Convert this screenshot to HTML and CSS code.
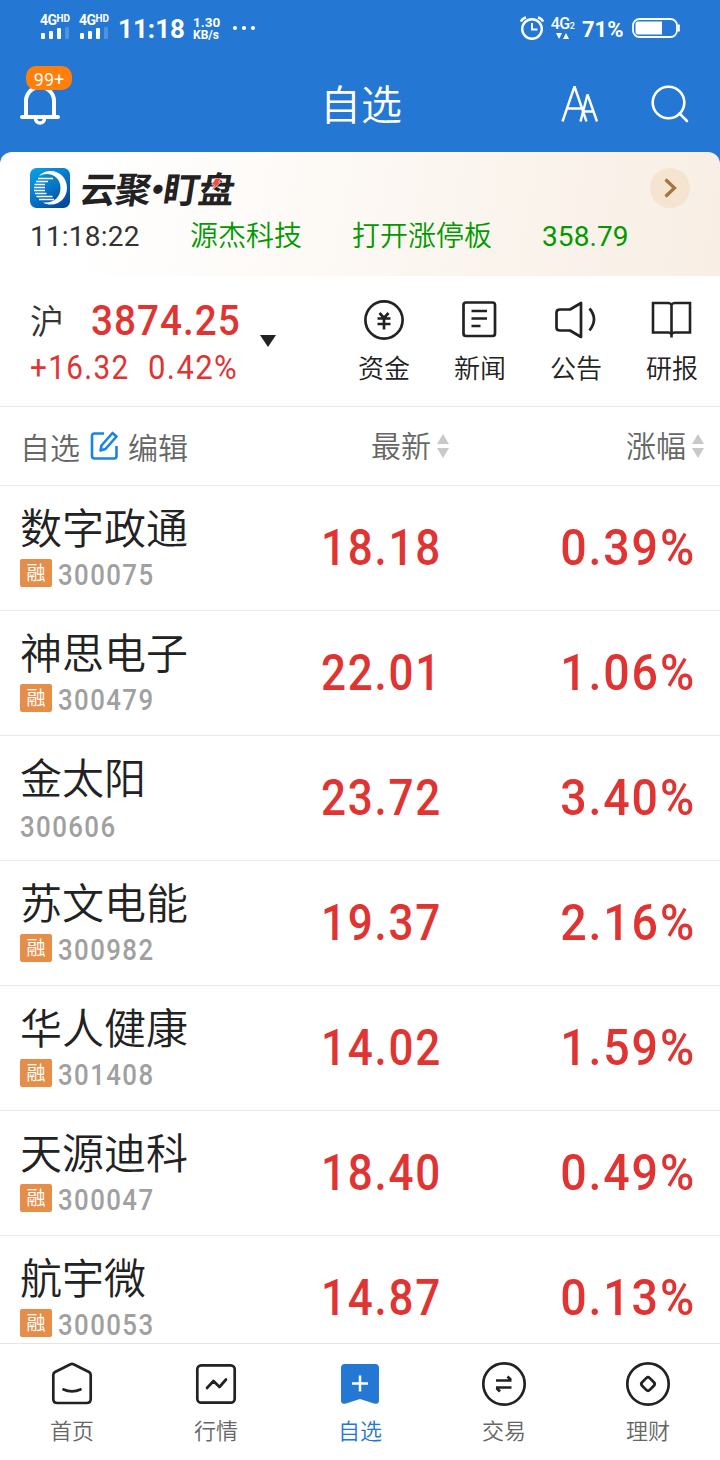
FILE: index.html
```html
<!DOCTYPE html>
<html lang="zh-CN">
<head>
<meta charset="utf-8">
<title>自选</title>
<link rel="stylesheet" href="styles.css">
</head>
<body>
<div class="app">
  <header class="top">
    <div class="status">
      <div class="status-left">
        <div class="signal"><div class="net">4G<span class="hd">HD</span></div>
          <svg width="30" height="13" viewBox="0 0 30 13" fill="#fff"><rect x="1" y="6" width="4" height="6" rx="1"/><rect x="9" y="4" width="4" height="8" rx="1"/><rect x="17" y="1" width="4" height="11" rx="1"/><rect x="25" y="0" width="4" height="12" rx="1" opacity=".2"/></svg></div>
        <div class="signal"><div class="net">4G<span class="hd">HD</span></div>
          <svg width="30" height="13" viewBox="0 0 30 13" fill="#fff"><rect x="1" y="6" width="4" height="6" rx="1"/><rect x="9" y="4" width="4" height="8" rx="1"/><rect x="17" y="1" width="4" height="11" rx="1"/><rect x="25" y="0" width="4" height="12" rx="1" opacity=".2"/></svg></div>
        <div class="clock">11:18</div>
        <div class="speed"><span class="rate">1.30</span><span class="unit">KB/s</span></div>
        <svg class="dots" width="24" height="6" viewBox="0 0 24 6" fill="#fff"><circle cx="3" cy="3" r="2.1"/><circle cx="12" cy="3" r="2.1"/><circle cx="21" cy="3" r="2.1"/></svg>
      </div>
      <div class="status-right">
        <svg width="24" height="24" viewBox="0 0 24 24" fill="none" stroke="#fff" stroke-width="2.400"><circle cx="12" cy="13" r="9.800"/><path d="M12 7v6.500h5.500" stroke-width="1.900"/><path d="M1 5.500q1-3 5-4M23 5.500q-1-3-5-4"/></svg>
        <div class="data"><div class="net data-net">4G<span class="sim">2</span></div>
          <svg width="13" height="6" viewBox="0 0 13 6" fill="#fff"><path d="M0 0h6l-3 6zM7 6h6L10 0z"/></svg></div>
        <div class="percent">71%</div>
        <svg width="48" height="20" viewBox="0 0 48 20"><rect x="1" y="1" width="44" height="18" rx="6.500" fill="none" stroke="#fff" stroke-width="1.800"/><path d="M6 3.500h24v13H6q-2.500 0-2.500-2.500V6q0-2.500 2.500-2.500z" fill="#fff"/><path d="M46.800 6.500v7" stroke="#fff" stroke-width="2"/></svg>
      </div>
    </div>
    <div class="nav">
      <div class="bell">
        <svg width="40" height="42" viewBox="0 0 40 42" fill="none" stroke="#fff" stroke-width="4" stroke-linecap="round"><path d="M2 34h36M6 33V18a14 14 0 0 1 28 0v15"/><path d="M15.500 35.500a4.500 4.500 0 0 0 9 0" stroke-width="3.500"/></svg>
        <span class="bell-count">99+</span>
      </div>
      <h1 class="title">自选</h1>
      <svg class="font-icon" width="38" height="38" viewBox="0 0 38 38" fill="none" stroke="#fff" stroke-width="2.400" stroke-linejoin="bevel"><path d="M1.500 36.500L13.500 1.500l12 35M6.500 23.500h14.500M19.500 36.500L26.500 9.500l9.500 27M22 26.500h10.500"/></svg>
      <svg class="search-icon" width="38" height="38" viewBox="0 0 38 38" fill="none" stroke="#fff" stroke-width="2.600" stroke-linecap="round"><circle cx="17.500" cy="17.500" r="15.800"/><path d="M28.500 28.500l7.500 7.500"/></svg>
    </div>
  </header>

  <section class="promo">
    <div class="brand">
      <svg width="40" height="40" viewBox="0 0 40 40">
        <defs><linearGradient id="logo-bg" x1="0" y1="0" x2=".7" y2="1"><stop offset="0" stop-color="#06a4e8"/><stop offset=".55" stop-color="#0877c8"/><stop offset="1" stop-color="#034b9b"/></linearGradient></defs>
        <rect width="40" height="40" rx="6.500" fill="url(#logo-bg)"/>
        <path d="M9 8C12 4.500 16 3 20 3c11 0 17 8 17 17s-7 16.500-16 16.500c-3 0-6-.5-8-2 11 1 17.500-5.500 17.500-14.500C30.500 11 24 6 17 6q-4 0-8 2z" fill="#fff"/>
        <path d="M8 10.500h15M6 13.500h12M4.500 16.500h10.500M4 19.500h11M4 22.500h11M5 25.500h11.500M6.500 28.500h16M9 31.500h15" stroke="#fff" stroke-width="1.600"/>
      </svg>
      <div class="wordmark"><span>云聚</span><span class="wordmark-dot">·</span><span>盯盘</span>
        <svg class="bolt" width="9" height="13" viewBox="0 0 9 13"><path d="M3 0h6L6.500 4H9L1 13l2-6H0z" fill="#f14b3a" stroke="#fff" stroke-width=".6"/></svg>
      </div>
      <svg class="more" width="40" height="40" viewBox="0 0 40 40" fill="none"><circle cx="20" cy="20" r="20" fill="#f4e4d0"/><path d="M15.500 11.500l9 8.500-9 8.500" stroke="#a5733f" stroke-width="3.200"/></svg>
    </div>
    <div class="ticker">
      <span class="ticker-time">11:18:22</span>
      <span class="ticker-stock cjk">源杰科技</span>
      <span class="ticker-event cjk">打开涨停板</span>
      <span class="ticker-price">358.79</span>
    </div>
  </section>

  <section class="market">
    <div class="index">
      <div class="index-main"><span class="index-name cjk">沪</span><span class="index-value">3874.25</span></div>
      <div class="index-sub"><span class="change">+16.32</span><span class="change-pct">0.42%</span></div>
    </div>
    <svg class="caret" width="16" height="12" viewBox="0 0 16 12"><path d="M0 0h16L8 12z" fill="#222"/></svg>
    <div class="quick">
      <div class="quick-item"><svg width="44" height="44" viewBox="0 0 44 44" fill="none" stroke="#222" stroke-width="2.700"><circle cx="22" cy="22" r="18.600"/><path d="M17.500 15l4.500 5 4.500-5M15.500 20.500h13M15.500 26h13M22 20v11.500"/></svg><span class="cjk">资金</span></div>
      <div class="quick-item"><svg width="44" height="44" viewBox="0 0 44 44" fill="none" stroke="#222" stroke-width="2.700"><rect x="5.500" y="4.500" width="31.500" height="33.500" rx="2.500"/><path d="M13.500 13h15.500M13.500 20.500h15.500M13.500 28h9"/></svg><span class="cjk">新闻</span></div>
      <div class="quick-item"><svg width="44" height="44" viewBox="0 0 44 44" fill="none" stroke="#222" stroke-width="2.700"><path d="M6 11.500h10L27 5v34L16 32.500H6q-3.500 0-3.500-3V14.500q0-3 3.500-3z" stroke-linejoin="round"/><path d="M35.500 10.500q9 10.500 0 22"/></svg><span class="cjk">公告</span></div>
      <div class="quick-item"><svg width="44" height="44" viewBox="0 0 44 44" fill="none" stroke="#222" stroke-width="2.600"><path d="M21.500 7q-1-2-3-2H3V34.500h15.500q2 0 3 2 1-2 3-2H40V5H24.500q-2 0-3 2zM21.500 7v32.500"/></svg><span class="cjk">研报</span></div>
    </div>
  </section>

  <section class="list-head">
    <div class="head-left cjk"><span>自选</span>
      <svg width="28" height="30" viewBox="0 0 28 30" fill="none" stroke="#1684e8" stroke-width="2.600" stroke-linejoin="round"><path d="M14 2.500H4.500Q2 2.500 2 5v20q0 2.500 2.500 2.500H24q2.500 0 2.500-2.500V15"/><path d="M11.500 14.500L22.500 2l4 3.500L15.500 18l-5 1.500z"/></svg>
      <span>编辑</span></div>
    <div class="head-price cjk"><span>最新</span><svg width="12" height="26" viewBox="0 0 12 26" fill="#c8c8c8"><path d="M6 1l6 10H0zM0 15h12L6 25z"/></svg></div>
    <div class="head-change cjk"><span>涨幅</span><svg width="12" height="26" viewBox="0 0 12 26" fill="#c8c8c8"><path d="M6 1l6 10H0zM0 15h12L6 25z"/></svg></div>
  </section>

  <main class="stocks">
    <div class="stock"><div class="info"><div class="name cjk">数字政通</div><div class="code"><span class="tag cjk">融</span><span class="digits">300075</span></div></div><div class="price">18.18</div><div class="pct">0.39%</div></div>
    <div class="stock"><div class="info"><div class="name cjk">神思电子</div><div class="code"><span class="tag cjk">融</span><span class="digits">300479</span></div></div><div class="price">22.01</div><div class="pct">1.06%</div></div>
    <div class="stock"><div class="info"><div class="name cjk">金太阳</div><div class="code code-plain"><span class="digits">300606</span></div></div><div class="price">23.72</div><div class="pct">3.40%</div></div>
    <div class="stock"><div class="info"><div class="name cjk">苏文电能</div><div class="code"><span class="tag cjk">融</span><span class="digits">300982</span></div></div><div class="price">19.37</div><div class="pct">2.16%</div></div>
    <div class="stock"><div class="info"><div class="name cjk">华人健康</div><div class="code"><span class="tag cjk">融</span><span class="digits">301408</span></div></div><div class="price">14.02</div><div class="pct">1.59%</div></div>
    <div class="stock"><div class="info"><div class="name cjk">天源迪科</div><div class="code"><span class="tag cjk">融</span><span class="digits">300047</span></div></div><div class="price">18.40</div><div class="pct">0.49%</div></div>
    <div class="stock"><div class="info"><div class="name cjk">航宇微</div><div class="code"><span class="tag cjk">融</span><span class="digits">300053</span></div></div><div class="price">14.87</div><div class="pct">0.13%</div></div>
  </main>

  <nav class="tabs cjk">
    <div class="tab"><svg width="46" height="46" viewBox="0 0 46 46" fill="none" stroke="#222" stroke-width="2.700" stroke-linejoin="round" stroke-linecap="round"><path d="M21.500 3.300q1.500-.8 3 0L40 11q1.700 1 1.700 3v24q0 4-4 4H8.300q-4 0-4-4V14q0-2 1.700-3z"/><path d="M14.500 28.500q8.500 3.800 17 0"/></svg><span>首页</span></div>
    <div class="tab"><svg width="46" height="46" viewBox="0 0 46 46" fill="none" stroke="#222" stroke-width="2.700" stroke-linejoin="round" stroke-linecap="round"><rect x="4.300" y="4.300" width="37.400" height="37.400" rx="4"/><path d="M14 27l6.500-7 6 6L33 18.500"/></svg><span>行情</span></div>
    <div class="tab tab-active"><svg width="46" height="46" viewBox="0 0 46 46"><path d="M8 3h30q4 0 4 4v32q0 5-5 3.500L23 38 9 42.500Q4 44 4 39V7q0-4 4-4z" fill="#2577d4"/><path d="M23 14.500v16M15 22.500h16" stroke="#fff" stroke-width="2.500"/></svg><span>自选</span></div>
    <div class="tab"><svg width="46" height="46" viewBox="0 0 46 46" fill="none" stroke="#222" stroke-width="2.700" stroke-linejoin="round"><circle cx="23" cy="23" r="20.700"/><path d="M15 19.500h15.500M15 26.500h15.500M26.500 15.500l3.500 3.500M19 30.500l-3.500-3.500"/></svg><span>交易</span></div>
    <div class="tab"><svg width="46" height="46" viewBox="0 0 46 46" fill="none" stroke="#222" stroke-width="2.700" stroke-linejoin="round"><circle cx="23" cy="23" r="20.700"/><rect x="17.600" y="17.600" width="10.800" height="10.800" rx="2.500" transform="rotate(45 23 23)"/></svg><span>理财</span></div>
  </nav>
</div>
</body>
</html>
```

FILE: styles.css
```css
* { box-sizing: border-box; }
body { margin: 0; background: #fff; font-family: Roboto, "Noto Sans CJK SC", sans-serif; color: #222; }
svg { display: block; flex: none; }
.cjk { font-family: "Noto Sans CJK SC", sans-serif; font-weight: 350; }
.app { width: 720px; height: 1460px; overflow: hidden; display: flex; flex-direction: column; background: linear-gradient(#2577d4 0 200px, #fff 200px); }

.top { height: 152px; flex: none; color: #fff; }
.status { height: 56px; display: flex; justify-content: space-between; padding: 0 40px 0 40px; }
.status-left { display: flex; align-items: center; }
.signal { width: 30px; margin-right: 9px; padding-bottom: 2px; }
.net { height: 13px; line-height: 12px; font-size: 14px; font-weight: 700; letter-spacing: -.5px; white-space: nowrap; }
.hd { font-size: 10px; vertical-align: 3px; line-height: 0; letter-spacing: -.1px; }
.clock { font-size: 26px; font-weight: 700; width: 75px; padding-top: 2px; }
.speed { width: 39px; font-weight: 700; display: flex; flex-direction: column; padding-top: 1px; }
.rate { font-size: 13.500px; line-height: 13px; }
.unit { font-size: 12px; line-height: 12px; }
.status-right { display: flex; align-items: center; }
.data { width: 23px; margin: 0 8px 0 7px; display: flex; flex-direction: column; align-items: center; gap: 2px; }
.data-net { font-size: 16px; height: 14px; line-height: 14px; font-weight: 500; }
.sim { font-size: 9px; }
.percent { font-size: 22px; font-weight: 700; width: 50px; padding-top: 3px; }
.nav { height: 96px; display: grid; grid-template-columns: 180px 362px 90px 88px; align-items: center; }
.bell { position: relative; width: 40px; margin-left: 20px; }
.bell-count { position: absolute; left: 6px; top: -17px; width: 46px; height: 24px; border-radius: 10px; background: #ff7f0a; font-size: 18px; line-height: 27px; text-align: center; }
.title { margin: 0; text-align: center; font: 350 41px/50px "Noto Sans CJK SC", sans-serif; padding-bottom: 4px; }
.font-icon { margin-left: 19px; }
.search-icon { margin-left: 19px; }

.promo { height: 124px; flex: none; border-radius: 12px 12px 0 0; background: linear-gradient(100deg, #fff 12%, #fdf9f5 45%, #f8eee4); padding: 16px 30px 0; }
.brand { display: flex; height: 40px; }
.wordmark { position: relative; margin-left: 11px; height: 40px; display: flex; font: 700 36px/38px "Noto Sans CJK SC", sans-serif; letter-spacing: -1px; transform: skewX(-9deg); }
.wordmark-dot { width: 13px; display: flex; justify-content: center; }
.bolt { position: absolute; right: 14px; top: 10px; }
.more { margin-left: auto; }
.ticker { display: flex; height: 60px; align-items: center; margin-top: -1px; font-size: 28px; line-height: 40px; color: #009a00; }
.ticker-time { width: 160px; color: #333; letter-spacing: .2px; }
.ticker-stock { width: 162px; padding-bottom: 6px; }
.ticker-event { width: 190px; padding-bottom: 6px; }
.ticker-price { letter-spacing: .1px; }

.market { height: 131px; flex: none; background: #fff; border-bottom: 1px solid #e9e9e9; display: flex; }
.index { width: 260px; padding: 19px 0 0 30px; color: #e03432; }
.index-main { display: flex; align-items: center; height: 50px; }
.index-name { width: 61px; font-size: 34px; line-height: 44px; color: #333; }
.index-value { font-size: 43px; font-weight: 500; letter-spacing: 1.100px; transform: scaleX(.9); transform-origin: left; }
.index-sub { display: flex; height: 44px; align-items: center; font-size: 33px; letter-spacing: 1.500px; }
.change { width: 118px; transform: scaleX(.9); transform-origin: left; }
.change-pct { transform: scaleX(.94); transform-origin: left; }
.caret { margin-top: 59px; width: 16px; }
.quick { margin-left: auto; width: 384px; display: flex; padding-top: 22px; }
.quick-item { width: 96px; display: flex; flex-direction: column; align-items: center; font-size: 26px; line-height: 36px; gap: 7px; color: #222; }

.list-head { height: 79px; flex: none; background: #fff; border-bottom: 1px solid #e9e9e9; display: grid; grid-template-columns: 240px 209px 255px; align-items: center; font-size: 30px; line-height: 40px; color: #666; }
.head-left { display: flex; align-items: center; gap: 10px; padding-left: 20px; }
.head-price, .head-change { display: flex; justify-content: flex-end; align-items: center; gap: 6px; }
.head-price span, .head-change span { padding-bottom: 4px; }

.stocks { height: 857px; flex: none; background: #fff; overflow: hidden; }
.stock { height: 125px; border-bottom: 1px solid #e9e9e9; display: grid; grid-template-columns: 240px 202px 254px; }
.info { padding: 14px 0 0 20px; }
.name { font-size: 42px; line-height: 51px; height: 59px; color: #222; }
.code { display: flex; align-items: center; height: 28px; font-size: 29px; line-height: 32px; color: #a0a0a0; }
.code-plain { padding-top: 4px; }
.digits { padding-top: 3px; font-weight: 500; letter-spacing: 1.600px; transform: scaleX(.89); transform-origin: left; }
.tag { width: 32px; height: 28px; margin-right: 6px; border-radius: 2px; background: #e48e4a; color: #fff; font-size: 19px; font-weight: 400; line-height: 25px; text-align: center; }
.price, .pct { font-size: 50px; line-height: 124px; font-weight: 500; color: #e03432; text-align: right; letter-spacing: 2px; transform: scaleX(.88); transform-origin: right; }
.pct { transform: scaleX(.93); }

.tabs { flex: 1; background: #fff; border-top: 1px solid #e4e4e4; display: flex; padding-top: 17px; }
.tab { width: 144px; display: flex; flex-direction: column; align-items: center; gap: 6px; font-size: 22px; line-height: 32px; color: #666; }
.tab-active { color: #2577d4; }
```
